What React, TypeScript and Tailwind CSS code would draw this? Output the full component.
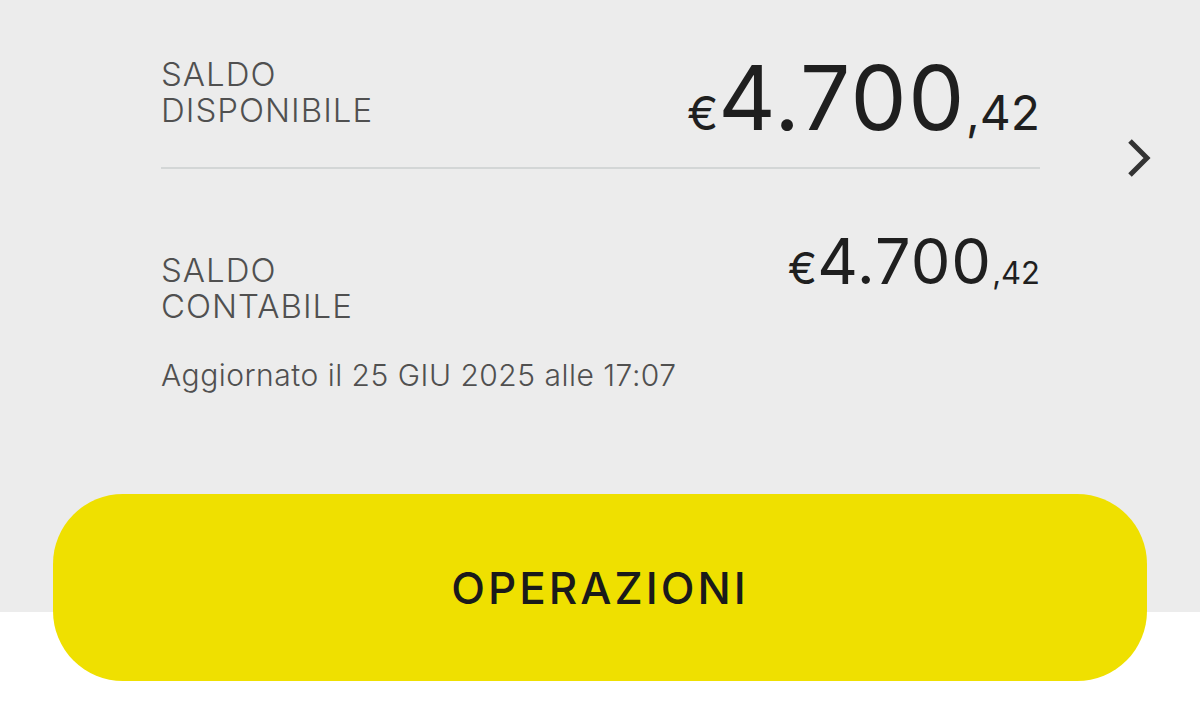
import React from "react";

export default function App() {
  return (
    <div
      className="w-[1200px] h-[718px] overflow-hidden bg-[linear-gradient(to_bottom,#ececec_612px,#ffffff_612px)]"
      style={{ fontFamily: "Inter, 'Noto Sans', sans-serif" }}
    >
      <div className="flex pt-[56px]">
        <div className="ml-[161px] w-[879px]">
          <div className="flex justify-between items-start">
            <div className="text-[33px] leading-[36px] font-light tracking-[1px] text-[#505050]">
              <div>SALDO</div>
              <div>DISPONIBILE</div>
            </div>
            <div className="flex items-baseline text-[#1f1f1f] leading-none -mt-[3px]">
              <span className="text-[47px]">€</span>
              <span className="text-[89px] tracking-[1.5px]">4.700</span>
              <span className="text-[48px]">,42</span>
            </div>
          </div>
          <div className="mt-[25px] h-[2px] bg-[#d3d6d6]" />
          <div className="flex justify-between items-start mt-[83px]">
            <div className="text-[33px] leading-[36px] font-light tracking-[1px] text-[#505050]">
              <div>SALDO</div>
              <div>CONTABILE</div>
            </div>
            <div className="flex items-baseline text-[#1f1f1f] leading-none -mt-[22px]">
              <span className="text-[44px]">€</span>
              <span className="text-[63px] tracking-[1px]">4.700</span>
              <span className="text-[31px]">,42</span>
            </div>
          </div>
          <div className="mt-[33px] text-[30px] leading-[36px] font-light tracking-[0.5px] text-[#505050]">
            Aggiornato il 25 GIU 2025 alle 17:07
          </div>
        </div>
        <div className="ml-[87px] mt-[82px]">
          <svg width="24" height="40" viewBox="0 0 24 40" fill="none">
            <path d="M3 3 L20 20 L3 37" stroke="#333333" strokeWidth="5" />
          </svg>
        </div>
      </div>
      <div className="mx-[53px] mt-[101px] h-[187px] rounded-[70px] bg-[#efe000] flex items-center justify-center">
        <span className="text-[44px] font-medium text-[#1a1a1a] tracking-[3px]">OPERAZIONI</span>
      </div>
    </div>
  );
}
